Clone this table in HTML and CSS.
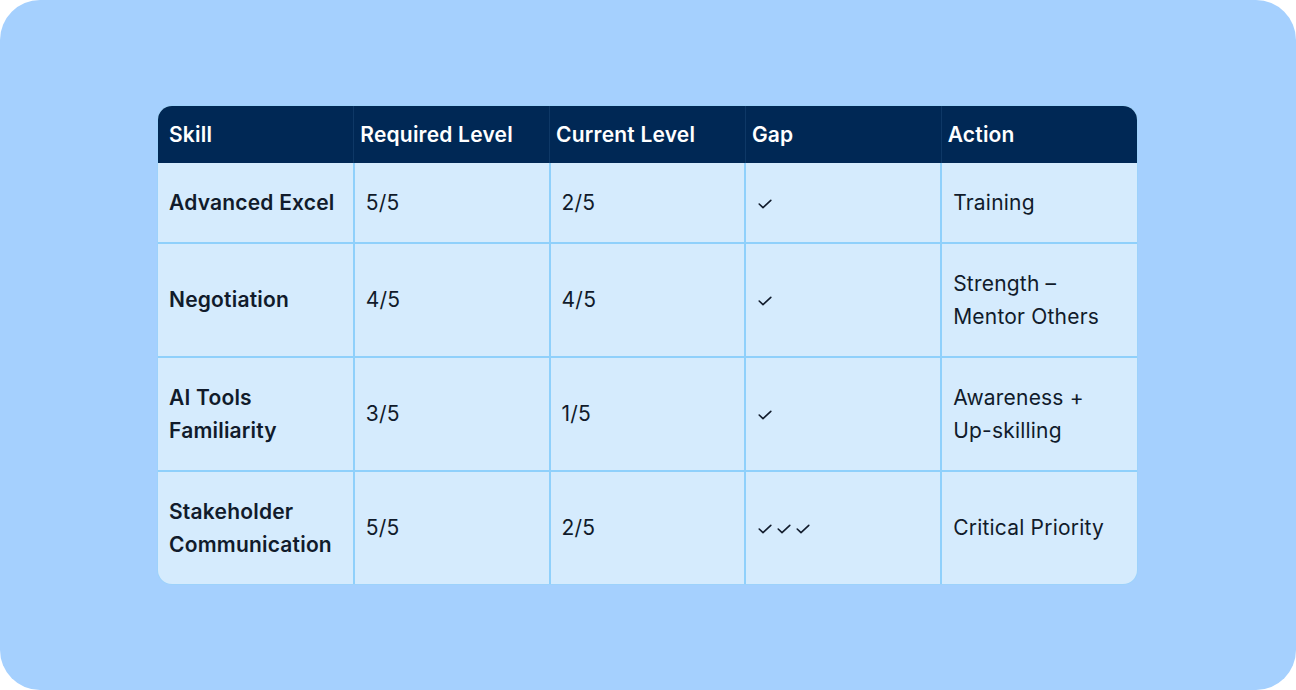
FILE: index.html
```html
<!DOCTYPE html>
<html lang="en">
<head>
<meta charset="utf-8">
<title>Skill Gap Table</title>
<link rel="stylesheet" href="styles.css">
</head>
<body>
<div class="frame">
  <div class="table-wrap">
    <table class="skills">
      <colgroup><col><col><col><col><col></colgroup>
      <thead>
        <tr>
          <th class="first">Skill</th>
          <th>Required Level</th>
          <th>Current Level</th>
          <th>Gap</th>
          <th>Action</th>
        </tr>
      </thead>
      <tbody>
        <tr class="short">
          <td class="skill">Advanced Excel</td>
          <td>5/5</td>
          <td>2/5</td>
          <td><span class="checks"><svg class="check" viewBox="0 0 14 10"><path d="M1.2 5 L5 8.6 L12.8 1.4"/></svg></span></td>
          <td>Training</td>
        </tr>
        <tr>
          <td class="skill">Negotiation</td>
          <td>4/5</td>
          <td>4/5</td>
          <td><span class="checks"><svg class="check" viewBox="0 0 14 10"><path d="M1.2 5 L5 8.6 L12.8 1.4"/></svg></span></td>
          <td>Strength –<br>Mentor Others</td>
        </tr>
        <tr>
          <td class="skill">AI Tools<br>Familiarity</td>
          <td>3/5</td>
          <td>1/5</td>
          <td><span class="checks"><svg class="check" viewBox="0 0 14 10"><path d="M1.2 5 L5 8.6 L12.8 1.4"/></svg></span></td>
          <td>Awareness +<br>Up-skilling</td>
        </tr>
        <tr>
          <td class="skill">Stakeholder<br>Communication</td>
          <td>5/5</td>
          <td>2/5</td>
          <td><span class="checks"><svg class="check" viewBox="0 0 14 10"><path d="M1.2 5 L5 8.6 L12.8 1.4"/></svg><svg class="check" viewBox="0 0 14 10"><path d="M1.2 5 L5 8.6 L12.8 1.4"/></svg><svg class="check" viewBox="0 0 14 10"><path d="M1.2 5 L5 8.6 L12.8 1.4"/></svg></span></td>
          <td>Critical Priority</td>
        </tr>
      </tbody>
    </table>
  </div>
</div>
</body>
</html>
```
FILE: styles.css
```css
html, body {
  margin: 0;
  padding: 0;
  background: #ffffff;
}
body {
  font-family: "Inter", "Noto Sans", sans-serif;
  color: #0f1a2a;
}
.frame {
  width: 1296px;
  height: 690px;
  background: #a5d0fe;
  border-radius: 40px;
  display: flex;
  align-items: center;
  justify-content: center;
  padding-right: 1px;
  padding-bottom: 1px;
  box-sizing: border-box;
}
.table-wrap {
  width: 979px;
  border-radius: 14px;
  overflow: hidden;
  background: #d5ebfd;
  box-shadow: 0 0 0 1px #9dd2fb;
}
.skills {
  width: 100%;
  border-collapse: collapse;
  table-layout: fixed;
  font-size: 21px;
  letter-spacing: 0.2px;
}
.skills col {
  width: 20%;
}
.skills th {
  background: #002855;
  color: #ffffff;
  font-weight: 600;
  text-align: left;
  height: 57px;
  padding: 0 6px;
  line-height: 33px;
  border-left: 1px solid #0e3866;
  box-sizing: border-box;
}
.skills th.first {
  padding-left: 11px;
  border-left: none;
}
.skills td {
  padding: 23px 11px;
  line-height: 33px;
  border: 2px solid #8fd0fb;
  vertical-align: middle;
  color: #111b2b;
}
.skills tr:first-child td {
  border-top: none;
}
.skills tr td:first-child {
  border-left: none;
  padding-left: 11px;
}
.skills tr td:last-child {
  border-right: none;
}
.skills tbody tr:last-child td {
  border-bottom: none;
}
.skills tr.short td {
  padding-top: 23px;
  padding-bottom: 23px;
}
.skills td.skill {
  font-weight: 600;
}
.checks {
  display: inline-flex;
  gap: 5px;
  align-items: center;
  vertical-align: middle;
  margin-left: 1px;
}
.check {
  width: 14px;
  height: 10px;
  display: block;
  fill: none;
  stroke: #111b2b;
  stroke-width: 1.6;
  stroke-linecap: round;
  stroke-linejoin: round;
}
```
